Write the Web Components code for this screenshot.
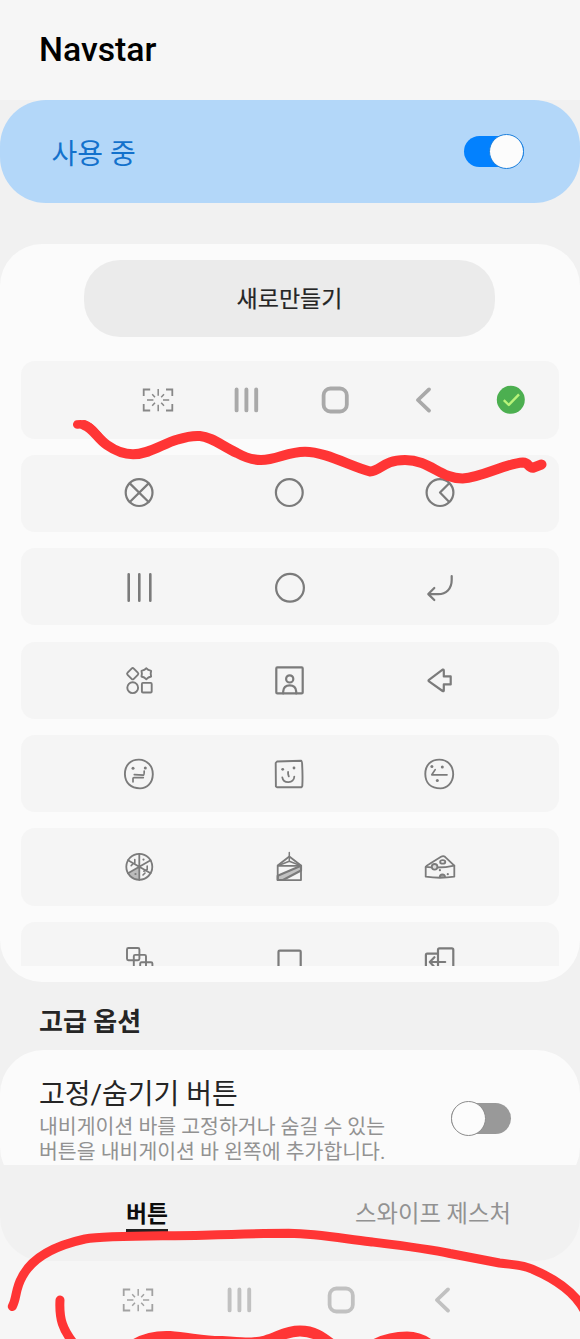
<!DOCTYPE html>
<html lang="ko">
<head>
<meta charset="utf-8">
<title>Navstar</title>
<style>
  body {
    margin: 0;
    background: #f6f6f6;
    font-family: Roboto, "Noto Sans CJK KR", sans-serif;
  }
</style>
</head>
<body>
<navstar-app></navstar-app>

<script>
const html = String.raw;

// every icon is drawn on a 36x36 canvas around (18,18)
const icons = {
  capture: html`<path stroke-width="1.8" stroke-linecap="butt" stroke-linejoin="miter" d="M3.7,14V7.5H10.2 M26,7.5H32.3V14 M32.3,22V28.5H26 M10.2,28.5H3.7V22"/>
    <path stroke-width="1.5" stroke-linecap="butt" d="M18.2,7V13.7 M18.2,22.7V29.2 M7,18H13.4 M23,18H29.2 M12.2,12.2L15,15.2 M24,12.2L21.2,15.2 M12.2,23.8L15,20.8 M24,23.8L21.2,20.8"/>`,
  bars: html`<path stroke-width="3.9" stroke-linecap="round" d="M8.6,7.4V28.4 M18.4,7.4V28.4 M28.2,7.4V28.4"/>`,
  home: html`<rect x="6.6" y="6.5" width="23.2" height="23" rx="6.8" stroke-width="3.8"/>`,
  back: html`<path stroke-width="3.8" stroke-linecap="round" d="M24,7.4L12.9,18L24,28.6"/>`,
  check: html`<circle cx="16.8" cy="17.8" r="14" fill="#4caf50" stroke="none"/>
    <path stroke="#b8f47a" stroke-width="2.4" stroke-linecap="butt" d="M9.8,18.2L14.8,23L25,12.4"/>`,
  cross: html`<circle cx="18.1" cy="17.6" r="13.4"/><path d="M8.8,8.4L27.6,27 M27.6,8.4L8.8,27"/>`,
  circle: html`<circle cx="18.3" cy="17.6" r="13.4"/>`,
  clock: html`<circle cx="19" cy="17.6" r="13.4"/><path d="M28,8.5L19,17.6L28,26.8"/>`,
  lines: html`<path stroke-width="2.6" d="M7.7,5.2V31.8 M18.3,5.2V31.8 M29.3,5.2V31.8"/>`,
  bigcircle: html`<circle cx="19" cy="18.8" r="13.9"/>`,
  enter: html`<path d="M30.7,7V11C30.7,20 25,25.1 17.3,25.1H7.5 M13.3,19L7.3,25.1L13.3,31"/>`,
  shapes: html`<g stroke-width="1.9"><path d="M10.6,6.6Q11.7,5.5 12.8,6.6L16.8,10.6Q17.9,11.7 16.8,12.8L12.8,16.8Q11.7,17.9 10.6,16.8L6.6,12.8Q5.5,11.7 6.6,10.6Z"/>
    <path d="M25.3,6.2L27.4,7.9L30.1,8.9L29.7,11.7L30.1,14.5L27.4,15.5L25.3,17.2L23.2,15.5L20.5,14.5L20.9,11.7L20.5,8.9L23.2,7.9Z"/>
    <circle cx="11.7" cy="25.7" r="5.4"/><rect x="20.9" y="20.9" width="9.8" height="9.6" rx="1"/></g>`,
  person: html`<rect x="5.3" y="5.4" width="26.4" height="26" rx="1"/><circle cx="18.7" cy="16.9" r="3.6"/>
    <path d="M12.2,31.4V29.4Q12.7,23.4 18.7,23.4T25.2,29.4V31.4"/>`,
  arrow: html`<path d="M8,17.8L21.6,7.6Q22.8,7.2 22.8,8.4V14.4H29.7V22.4H22.8V28.4Q22.8,29.6 21.6,29L8,19.4Q7,18.6 8,17.8Z"/>`,
  face1: html`<path stroke-width="1.9" d="M18,3.6C26,3.8 32,10 31.8,18.5C31.6,27 26,32.4 19,32.4C10,32.2 4,27 3.9,18C4,9 9.6,3.5 18,3.6Z"/>
    <path stroke-width="1.7" d="M13.3,18.6L22.5,19.2Q23.2,19 23.2,15 M12,25.8V22.6Q12,21.6 13,21.6H22.3"/>
    <circle class="dot" cx="12" cy="12.3" r="1.5"/><circle class="dot" cx="24.3" cy="12" r="1.5"/>`,
  face2: html`<path stroke-width="1.9" d="M6,5.5L30,4.8Q31.2,5 31.2,10Q31.8,20 31.3,30L30.5,31.3L6,31.2L4.9,30.5L4.7,7Z"/>
    <path stroke-width="1.8" d="M17.1,16V18L17.8,20.4 M11.3,21.3C12.5,28 23.2,27.5 23.3,20.6"/>
    <circle class="dot" cx="11.7" cy="13.3" r="1.4"/><circle class="dot" cx="23" cy="12" r="1.4"/>`,
  face3: html`<path stroke-width="1.9" d="M18.3,3.6C27,3.6 32.2,10 32.2,18.5C31.8,27 26,32.4 19.5,32.4C10,32.2 4.3,27 4.3,18C4.3,9 10,3.6 18.3,3.6Z"/>
    <path stroke-width="1.7" d="M14.2,13.6L10.8,18.8H26"/>
    <circle class="dot" cx="10.9" cy="10.6" r="1.5"/><circle class="dot" cx="21.3" cy="11" r="1.5"/><circle class="dot" cx="16.3" cy="24.6" r="1.5"/>`,
  pizza: html`<path d="M18.3,17.8V30.8A13,13 0 0 1 7,24.3Z" fill="#bbb" stroke="none"/>
    <g stroke-width="1.8"><circle cx="18.3" cy="17.8" r="13"/><path d="M18.3,4.8V30.8 M7,11.3L29.6,24.3 M7,24.3L29.6,11.3"/></g>
    <path stroke-width="1.6" d="M13.8,10.5V14.2 M10.2,16.6L12,14.8 M26.2,17V20.5L22.8,22.2 M22,26L24,24"/>
    <circle class="dot" cx="22.5" cy="10.6" r="1.1"/><circle class="dot" cx="14.5" cy="25" r="1.1"/>`,
  sandwich: html`<path d="M6.7,26.8L30,16.8V21.5L12,31H6.7Z" fill="#c2c2c2"/>
    <g stroke-width="1.8"><path d="M6.7,16.5L18.3,7.5L30,16.5V31.1H6.7Z M6.7,16.8H30"/>
    <path stroke-width="1.5" d="M18.3,3.5V12.2 M8,16.2L18.3,12.2L28.7,16.2"/></g>`,
  cheese: html`<g stroke-width="1.8"><path d="M4.7,18.3Q5,16.8 8,15.2L20,7.8Q22.3,6.4 24,7.8L33.3,16.6V27.7Q19,29.8 4.7,27.7Z"/>
    <path d="M4.7,17.8Q20,19.6 33.3,16.6"/><circle cx="13.6" cy="17.8" r="2.8" fill="#ddd"/><ellipse cx="21.7" cy="12.9" rx="2.6" ry="1.7"/>
    <path d="M18.8,28Q18.8,25.4 21.4,25.4T24,28" fill="#999"/></g>
    <circle class="dot" cx="18.9" cy="21.2" r="1.1"/><circle class="dot" cx="26.8" cy="25.2" r="1.1"/>`,
  stack: html`<g stroke-width="1.9"><rect x="6" y="5" width="12.4" height="12.2" rx="1.4"/><rect x="12.8" y="11.9" width="12.2" height="12.2" rx="1.4"/><rect x="19.2" y="19.2" width="12.2" height="12" rx="1.4"/></g>`,
  square: html`<rect x="7.5" y="7.6" width="22.2" height="22.4" rx="1.2"/>`,
  panels: html`<path d="M17,25V7Q17,5.4 18.4,5.4H30.9Q32.3,5.4 32.3,7V30 M17,10.7H6.1Q4.9,10.7 4.9,12.3V30 M9,19H24.2 M13.4,14.2L8.8,19L13.4,24"/>`,
};

class NavIcon extends HTMLElement {
  constructor() {
    super();
    this.attachShadow({ mode: "open" });
  }

  connectedCallback() {
    this.shadowRoot.innerHTML = html`
      <style>
        :host { display: block; width: 36px; height: 36px; justify-self: center; }
        svg { display: block; fill: none; stroke: currentColor; stroke-width: 2.2; stroke-linejoin: round; stroke-linecap: round; }
        .dot { fill: currentColor; stroke: none; }
      </style>
      <svg width="36" height="36" viewBox="0 0 36 36">${icons[this.getAttribute("name")]}</svg>
    `;
  }
}

class NavSwitch extends HTMLElement {
  constructor() {
    super();
    this.attachShadow({ mode: "open" }).innerHTML = html`
      <style>
        :host {
          display: flex; align-items: center; box-sizing: border-box;
          width: 60px; height: 31px; border-radius: 16px; background: #999;
        }
        :host([checked]) { justify-content: flex-end; background: #0381fe; }
        i {
          flex: none; box-sizing: border-box; width: 35px; height: 35px;
          border: 1.5px solid #8c8c8c; border-radius: 50%; background: #fcfcfc;
        }
        :host([checked]) i { border-color: #1b7fdc; }
      </style>
      <i></i>
    `;
  }
}

class NavPreset extends HTMLElement {
  constructor() {
    super();
    this.attachShadow({ mode: "open" });
  }

  connectedCallback() {
    const names = this.getAttribute("icons").split(" ");
    this.shadowRoot.innerHTML = html`
      <style>
        :host {
          display: grid; grid-template-columns: repeat(3, 150.2px); align-items: center;
          flex: none; box-sizing: border-box; height: 77.3px; padding-left: 43px;
          border-radius: 14px; background: #f5f5f5; color: #7b7b7b;
        }
        :host([current]) { grid-template-columns: repeat(5, 88.5px); padding-left: 92.7px; color: #a9a9a9; }
        [name="capture"] { color: #888; }
      </style>
      ${names.map((name) => `<nav-icon name="${name}"></nav-icon>`).join("")}
    `;
  }
}

class NavOption extends HTMLElement {
  constructor() {
    super();
    this.attachShadow({ mode: "open" }).innerHTML = html`
      <style>
        :host {
          display: flex; justify-content: space-between; box-sizing: border-box;
          height: 141px; padding: 25px 69px 0 39px; border-radius: 44px; background: #fbfbfb;
        }
        .title { font-size: 28px; line-height: 40px; color: #252525; }
        .text { font-size: 20.5px; line-height: 25px; color: #929292; white-space: nowrap; }
        nav-switch { margin-top: 28px; }
      </style>
      <div>
        <div class="title"><slot name="title"></slot></div>
        <div class="text"><slot></slot></div>
      </div>
      <nav-switch></nav-switch>
    `;
  }
}

class NavTabs extends HTMLElement {
  constructor() {
    super();
    this.attachShadow({ mode: "open" }).innerHTML = html`
      <style>
        :host {
          display: grid; grid-template-columns: 1fr 1fr; justify-items: center; box-sizing: border-box;
          height: 96.5px; padding: 33.5px 4px 0 4px; border-radius: 0 0 44px 44px;
          background: #f1f1f1; font-size: 23.3px; line-height: 33px; color: #929292;
        }
        .on { height: 31px; border-bottom: 3px solid #222; font-size: 22.8px; font-weight: 700; color: #0c0c0c; }
      </style>
      <div class="on"><slot name="active"></slot></div>
      <div><slot></slot></div>
    `;
  }
}

class NavstarApp extends HTMLElement {
  constructor() {
    super();
    this.attachShadow({ mode: "open" }).innerHTML = html`
      <style>
        :host { display: block; position: relative; width: 580px; height: 1339px; overflow: hidden; }
        header {
          box-sizing: border-box; height: 100px; padding: 29px 39px 0;
          font-size: 33.8px; font-weight: 500; line-height: 42px; color: #000;
        }
        main { height: 1064.5px; overflow: hidden; background: #f1f1f1; }
        .state {
          display: flex; align-items: center; justify-content: space-between; box-sizing: border-box;
          height: 103px; padding: 0 56px 0 51.5px; border-radius: 46px;
          background: #b3d7f9; color: #1371cc; font-size: 28px;
        }
        .presets {
          display: flex; flex-direction: column; box-sizing: border-box;
          height: 737.5px; margin-top: 41px; padding: 16px 21px; border-radius: 42px; background: #fbfbfb;
        }
        button {
          align-self: center; width: 411px; height: 77px; margin: 0 1px 24.3px 0; padding: 2px 0 0;
          border: 0; border-radius: 36px; background: #ebebeb; color: #252525;
          font: 400 23px/75px Roboto, "Noto Sans CJK KR", sans-serif; -webkit-text-stroke: 0.2px #252525;
        }
        .list { display: flex; flex-direction: column; gap: 16.15px; height: 604.4px; overflow: hidden; }
        h2 { margin: 0; padding: 21px 39px 9px; font-size: 26px; font-weight: 700; line-height: 38px; color: #252525; }
        .bar {
          display: grid; grid-template-columns: repeat(4, 101.4px); align-items: center;
          height: 78px; padding-left: 87.2px; color: #c1c1c1;
        }
        .bar [name="capture"] { color: #a2a2a2; }
        .ink { position: absolute; left: 0; top: 0; pointer-events: none; }
      </style>
      <header>Navstar</header>
      <main>
        <div class="state"><span>사용 중</span><nav-switch checked></nav-switch></div>
        <div class="presets">
          <button>새로만들기</button>
          <div class="list">
            <nav-preset current icons="capture bars home back check"></nav-preset>
            <nav-preset icons="cross circle clock"></nav-preset>
            <nav-preset icons="lines bigcircle enter"></nav-preset>
            <nav-preset icons="shapes person arrow"></nav-preset>
            <nav-preset icons="face1 face2 face3"></nav-preset>
            <nav-preset icons="pizza sandwich cheese"></nav-preset>
            <nav-preset icons="stack square panels"></nav-preset>
          </div>
        </div>
        <h2>고급 옵션</h2>
        <nav-option>
          <span slot="title">고정/숨기기 버튼</span>
          내비게이션 바를 고정하거나 숨길 수 있는<br>버튼을 내비게이션 바 왼쪽에 추가합니다.
        </nav-option>
      </main>
      <nav-tabs><span slot="active">버튼</span>스와이프 제스처</nav-tabs>
      <div class="bar">
        <nav-icon name="capture"></nav-icon>
        <nav-icon name="bars"></nav-icon>
        <nav-icon name="home"></nav-icon>
        <nav-icon name="back"></nav-icon>
      </div>
      <!-- hand drawn marker strokes -->
      <svg class="ink" width="580" height="1339" fill="none" stroke="#ff3535" stroke-width="10" stroke-linecap="round" stroke-linejoin="round">
        <path stroke-width="8.5" d="M77.2,424.5C90,422 95,434 103,441.5"/>
        <path d="M84,425C93,428 97,438 107,445C117,452 124,454.3 133,454.3C150,454 162,444 177.6,439.5C187,436.5 193,435.5 200,436C212,437 222,446 237,453C246,458 253,460 261,460C277,460 287,451.7 305,451.7C325,451.7 350,466 370,471.5C381,471 383,460 405,460C430,460 440,478.5 462.5,478.5C484,477 503,464 523,462.5C529,462.5 528,468 533,467.7L541.5,464.5"/>
        <path stroke-width="9" d="M12.3,1306.5C17,1298 15,1289 22.2,1276.7C32,1258 53,1246 85,1239C107,1235.5 150,1236.3 203.5,1235.3C240,1234 265,1233.3 288.6,1233.3C320,1234 345,1239 370,1241.7C405,1246 430,1249 450,1253.5L499.5,1263C515,1265 524,1265 532.7,1269.3C553,1278 574,1291 584,1310"/>
        <path stroke-width="9" d="M60,1300C59,1318 62,1330 76,1346"/>
        <path stroke-width="11" d="M134,1345C145,1338 158,1336 170,1336.5C190,1338 206,1342 222,1341.5C240,1343 252,1344 265,1341C278,1338 284,1331 300,1331C314,1331 322,1337 331,1344 M374,1345C385,1339 397,1337 407,1337C416,1337 424,1340 431,1346"/>
      </svg>
    `;
  }
}

customElements.define("nav-icon", NavIcon);
customElements.define("nav-switch", NavSwitch);
customElements.define("nav-preset", NavPreset);
customElements.define("nav-option", NavOption);
customElements.define("nav-tabs", NavTabs);
customElements.define("navstar-app", NavstarApp);
</script>
</body>
</html>
